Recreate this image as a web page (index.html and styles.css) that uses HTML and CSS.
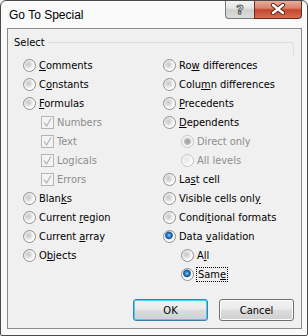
FILE: index.html
```html
<!DOCTYPE html>
<html>

<head>
    <meta charset="UTF-8">
    <meta name="viewport" content="width=device-width, initial-scale=1.0">
    <title>Go To Special</title>
    <link rel="stylesheet" href="styles.css">
</head>

<body>
    <div class="window">
        <div class="titlebar">
            <span class="title">Go To Special</span>
            <div class="caption-buttons">
                <button class="cap-btn help">?</button>
                <button class="cap-btn close">
                    <svg width="16" height="12" viewBox="0 0 16 12">
                        <path d="M3 2 L13 10 M13 2 L3 10" stroke="#5a2218" stroke-width="4.2" stroke-linecap="round" />
                        <path d="M3 2 L13 10 M13 2 L3 10" stroke="#fff" stroke-width="2.4" stroke-linecap="round" />
                    </svg>
                </button>
            </div>
        </div>

        <div class="client">
            <div class="group-head">
                <span class="group-label">Select</span>
                <span class="group-line"></span>
            </div>

            <div class="options">
                <div class="col">
                    <div class="opt"><span class="radio"></span><span><u>C</u>omments</span></div>
                    <div class="opt"><span class="radio"></span><span>C<u>o</u>nstants</span></div>
                    <div class="opt"><span class="radio"></span><span><u>F</u>ormulas</span></div>
                    <div class="opt sub disabled"><span class="check"></span><span>Numbers</span></div>
                    <div class="opt sub disabled"><span class="check"></span><span>Text</span></div>
                    <div class="opt sub disabled"><span class="check"></span><span>Logicals</span></div>
                    <div class="opt sub disabled"><span class="check"></span><span>Errors</span></div>
                    <div class="opt"><span class="radio"></span><span>Blan<u>k</u>s</span></div>
                    <div class="opt"><span class="radio"></span><span>Current <u>r</u>egion</span></div>
                    <div class="opt"><span class="radio"></span><span>Current <u>a</u>rray</span></div>
                    <div class="opt"><span class="radio"></span><span>O<u>b</u>jects</span></div>
                </div>
                <div class="col">
                    <div class="opt"><span class="radio"></span><span>Ro<u>w</u> differences</span></div>
                    <div class="opt"><span class="radio"></span><span>Colu<u>m</u>n differences</span></div>
                    <div class="opt"><span class="radio"></span><span><u>P</u>recedents</span></div>
                    <div class="opt"><span class="radio"></span><span><u>D</u>ependents</span></div>
                    <div class="opt sub disabled"><span class="radio checked"></span><span>Direct only</span></div>
                    <div class="opt sub disabled"><span class="radio"></span><span>All levels</span></div>
                    <div class="opt"><span class="radio"></span><span>La<u>s</u>t cell</span></div>
                    <div class="opt"><span class="radio"></span><span>Visible cells onl<u>y</u></span></div>
                    <div class="opt"><span class="radio"></span><span>Condi<u>t</u>ional formats</span></div>
                    <div class="opt"><span class="radio checked"></span><span>Data <u>v</u>alidation</span></div>
                    <div class="opt sub"><span class="radio"></span><span>A<u>l</u>l</span></div>
                    <div class="opt sub"><span class="radio checked"></span><span class="focus">Sam<u>e</u></span></div>
                </div>
            </div>

            <div class="buttons">
                <button class="dlg-btn default">OK</button>
                <button class="dlg-btn">Cancel</button>
            </div>
        </div>
    </div>
</body>

</html>
```

FILE: styles.css
```css
body {
    margin: 0;
    font-family: "DejaVu Sans Condensed", "DejaVu Sans", sans-serif;
    font-size: 11px;
    color: #000;
    background: #fff;
}

.window {
    width: 308px;
    height: 336px;
    box-sizing: border-box;
    border: 1px solid #4a4a4a;
    border-radius: 6px 6px 2px 2px;
    background: #fafafa;
    display: flex;
    flex-direction: column;
    padding: 0 5px 6px 6px;
    overflow: hidden;
}

.titlebar {
    height: 28px;
    display: flex;
    justify-content: space-between;
    align-items: flex-start;
    margin-top: -1px;
}

.title {
    font-family: "Liberation Sans", Arial, sans-serif;
    font-size: 12px;
    padding-left: 2px;
    margin-top: 8px;
    color: #000;
}

.caption-buttons {
    display: flex;
}

.cap-btn {
    height: 19px;
    padding: 0;
    border: 1px solid #7a7a7a;
    border-top: none;
    display: flex;
    align-items: center;
    justify-content: center;
}

.help {
    width: 29px;
    border-radius: 0 0 0 4px;
    border-right: none;
    background: linear-gradient(#f6f6f6, #e4e4e4 45%, #cfcfcf 55%, #dcdcdc);
    font-family: "DejaVu Sans", sans-serif;
    font-weight: bold;
    font-size: 13px;
    color: #f4f4f4;
    -webkit-text-stroke: 1px #5a5a5a;
}

.close {
    width: 48px;
    border-radius: 0 0 4px 0;
    border-color: #6b2a20;
    background: linear-gradient(#eab3a4, #d9826c 45%, #c5452c 55%, #d56f53);
}

.client {
    flex: 1;
    border: 1px solid #8c8c8c;
    background: #f0f0f0;
    display: flex;
    flex-direction: column;
    padding: 6px 7px 7px 0;
}

.group-head {
    display: flex;
    align-items: center;
    height: 14px;
    padding-left: 6px;
    gap: 3px;
}

.group-line {
    flex: 1;
    height: 13px;
    margin-top: 13px;
    border-top: 1px solid #d5dfe5;
    border-right: 1px solid #d5dfe5;
    border-radius: 0 3px 0 0;
}

.options {
    display: grid;
    grid-template-columns: 140px 1fr;
    padding-left: 15px;
    margin-top: 7px;
}

.col {
    display: flex;
    flex-direction: column;
}

.opt {
    height: 19px;
    display: flex;
    align-items: center;
    gap: 3px;
    white-space: nowrap;
}

.opt u {
    text-underline-offset: 1px;
}

.opt.sub {
    padding-left: 18px;
}

.opt.disabled {
    color: #8d8d8d;
}

.radio {
    width: 13px;
    height: 13px;
    flex: none;
    box-sizing: border-box;
    border-radius: 50%;
    border: 1px solid #8f8f8f;
    background: radial-gradient(circle at 40% 40%, #c8c8c8 0, #dadada 2.5px, #f0f0f0 4.5px, #f8f8f8 5px, #fff 5.5px);
}

.radio.checked {
    background: radial-gradient(circle at 45% 40%, #8ed0f6 0, #2f83c8 1.8px, #1a5a98 3.2px, #3d78ae 3.6px, #f8f8f8 4.3px, #fff 5.5px);
}

.disabled .radio {
    border-color: #c4c4c4;
    background: radial-gradient(circle at 40% 40%, #e6e6e6 0, #efefef 3px, #f6f6f6 5px, #fbfbfb 5.5px);
}

.disabled .radio.checked {
    background: radial-gradient(circle, #9a9a9a 0, #b4b4b4 2.5px, #c8c8c8 3.3px, #f4f4f4 4.2px, #fbfbfb 5.5px);
}

.check {
    width: 13px;
    height: 13px;
    flex: none;
    box-sizing: border-box;
    border: 1px solid #b5b5b5;
    background: #f4f4f4 url("data:image/svg+xml,%3Csvg xmlns='http://www.w3.org/2000/svg' width='11' height='11'%3E%3Cpath d='M2 5.5 L4.5 9 L9 1.5' fill='none' stroke='%23b0b0b0' stroke-width='1.2'/%3E%3C/svg%3E") no-repeat center;
}

.focus {
    outline: 1px dotted #000;
    outline-offset: 0;
    padding: 0 1px;
}

.buttons {
    margin-top: auto;
    display: flex;
    justify-content: flex-end;
    gap: 11px;
}

.dlg-btn {
    width: 75px;
    height: 22px;
    font-family: inherit;
    font-size: 11px;
    color: #000;
    border: 1px solid #707070;
    border-radius: 3px;
    background: linear-gradient(#f2f2f2, #ebebeb 45%, #dddddd 50%, #cfcfcf);
    box-shadow: inset 0 0 0 1px #fcfcfc;
    padding: 0;
}

.dlg-btn.default {
    border-color: #3c7fb1;
    box-shadow: inset 0 0 0 1px #48d0f5;
}
```
